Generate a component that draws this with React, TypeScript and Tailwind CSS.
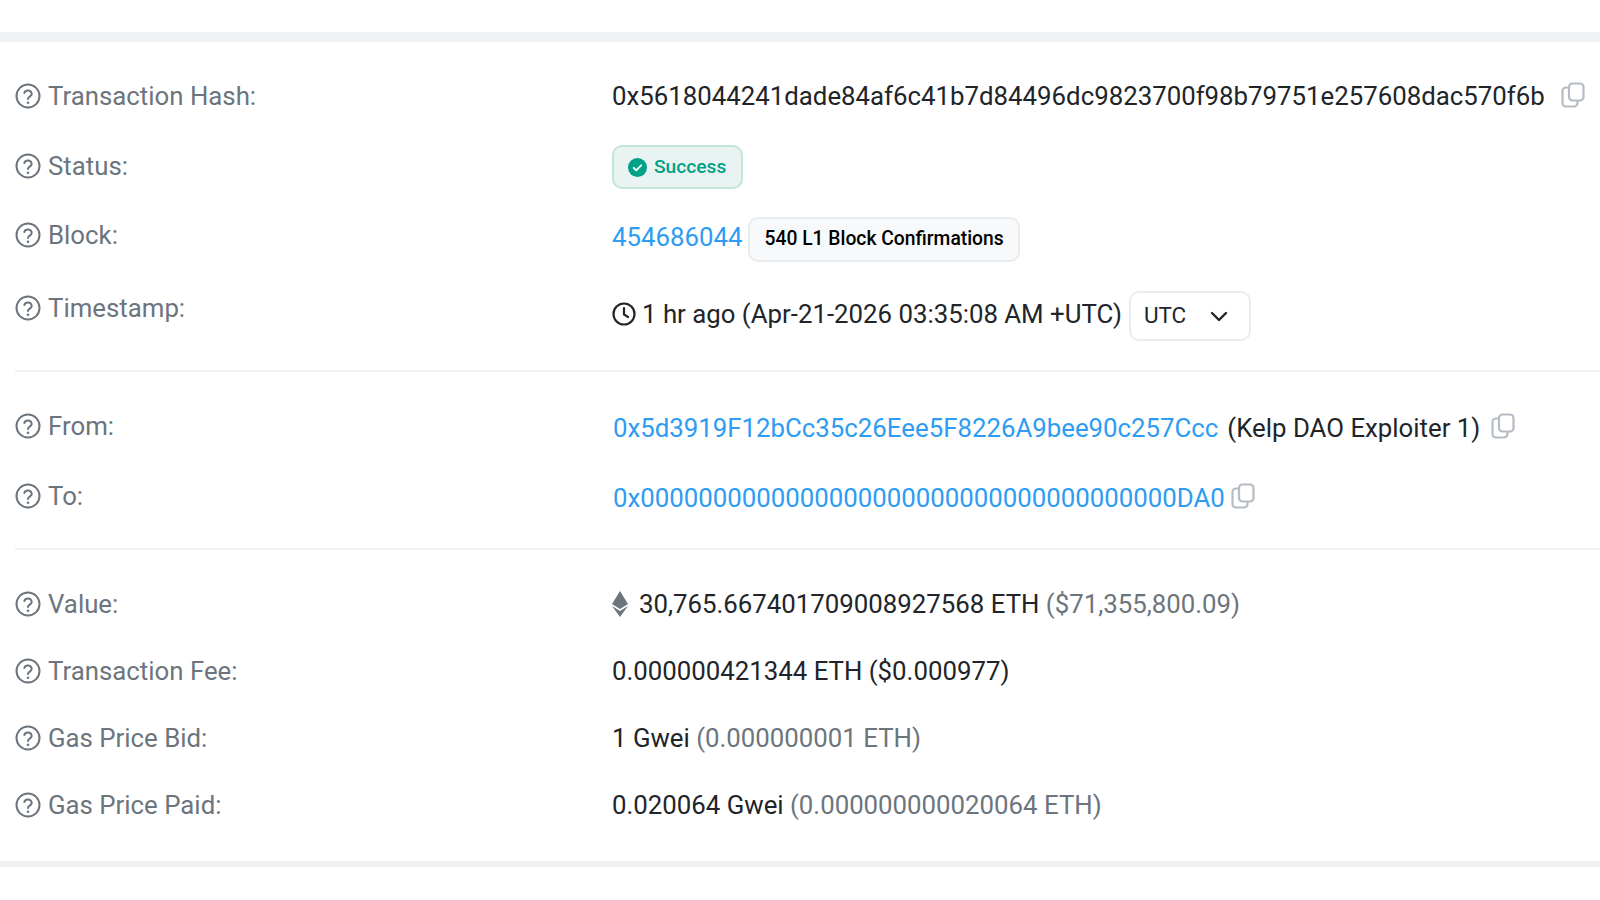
import React from "react";

const Q = () => (
  <svg width="26" height="26" viewBox="0 0 26 26" fill="none" stroke="#6c757d" strokeWidth="2" className="shrink-0">
    <circle cx="13" cy="13" r="11.5" />
    <path d="M9.300 10a3.800 3.800 0 0 1 7.400 1c0 2.500-3.700 2.800-3.700 5" strokeLinecap="round" />
    <circle cx="13" cy="19.800" r="1.300" fill="#6c757d" stroke="none" />
  </svg>
);

const Copy = () => (
  <svg width="24" height="26" viewBox="0 0 24 26" fill="none" stroke="#b6bcc4" strokeWidth="2.200" className="shrink-0">
    <rect x="8" y="1.500" width="14.500" height="17" rx="3.500" />
    <path d="M8 5.500H5A3.500 3.500 0 0 0 1.500 9v12A3.500 3.500 0 0 0 5 24.500h8a3.500 3.500 0 0 0 3.500-3.500v-2.500" />
  </svg>
);

const Row = ({ label, h, pt, lpt, children }: { label: string; h: string; pt: string; lpt?: string; children: React.ReactNode }) => (
  <div className={`flex ${h}`}>
    <div className={`w-[612px] shrink-0 flex items-start gap-[7px] pl-[15px] text-[#6c757d] ${lpt ?? pt}`}>
      <Q />
      <span className="leading-[26px]">{label}</span>
    </div>
    <div className={`flex items-start min-w-0 text-[#212529] whitespace-nowrap ${pt}`}>{children}</div>
  </div>
);

export default function App() {
  return (
    <div className="w-[1600px] h-[900px] overflow-hidden bg-white text-[25.800px] font-['Roboto',sans-serif]">
      <div className="h-[32px]" />
      <div className="h-[10px] bg-[#f0f1f4]" />
      <div className="h-[19px]" />
      <Row label="Transaction Hash:" h="h-[70px]" pt="pt-[22px]">
        <span className="leading-[26px]">0x5618044241dade84af6c41b7d84496dc9823700f98b79751e257608dac570f6b</span>
        <span className="ml-[16px] -mt-[1px]"><Copy /></span>
      </Row>
      <Row label="Status:" h="h-[70px]" pt="pt-[22px]">
        <span className="-mt-[8px] h-[44px] w-[131px] flex items-center gap-[7px] pl-[14px] rounded-[10px] border-2 border-[#c3e6dc] bg-[#e9f4f2] text-[#00a186] text-[19.200px] font-medium">
          <svg width="19" height="19" viewBox="0 0 19 19">
            <circle cx="9.500" cy="9.500" r="9.500" fill="#00a186" />
            <path d="M5.700 9.800l2.500 2.500 5-5" fill="none" stroke="#fff" strokeWidth="1.800" strokeLinecap="round" strokeLinejoin="round" />
          </svg>
          Success
        </span>
      </Row>
      <Row label="Block:" h="h-[70px]" pt="pt-[22px]" lpt="pt-[21px]">
        <span className="leading-[26px] text-[#2d9cf2] mt-[1px]">454686044</span>
        <span className="ml-[6px] -mt-[6px] h-[45px] px-[14px] flex items-center rounded-[10px] border-2 border-[#e9ecef] bg-[#f8f9fa] text-[19.300px] font-medium text-[#000]">540 L1 Block Confirmations</span>
      </Row>
      <Row label="Timestamp:" h="h-[99px]" pt="pt-[24px]">
        <span className="flex items-center mt-[6px] leading-[26px]">
          <svg width="24" height="24" viewBox="0 0 24 24" fill="none" stroke="#212529" strokeWidth="2.200" className="mr-[6px]">
            <circle cx="12" cy="12" r="10.500" />
            <path d="M12 6v6.500l4 2.500" strokeLinecap="round" />
          </svg>
          1 hr ago (Apr-21-2026 03:35:08 AM +UTC)
        </span>
        <span className="ml-[7px] -mt-[4px] h-[50px] w-[122px] flex items-center justify-between pl-[13px] pr-[21px] rounded-[10px] border-2 border-[#e9ecef] text-[22.500px] text-[#212529]">
          UTC
          <svg width="18" height="11" viewBox="0 0 18 11" fill="none" stroke="#212529" strokeWidth="2.400" strokeLinecap="round" strokeLinejoin="round"><path d="M2 2l7 7 7-7" /></svg>
        </span>
      </Row>
      <div className="h-[2px] ml-[15px] bg-[#eff1f3]" />
      <Row label="From:" h="h-[89px]" pt="pt-[41px]">
        <span className="leading-[26px] mt-[2px] ml-[1px] text-[#2d9cf2]">0x5d3919F12bCc35c26Eee5F8226A9bee90c257Ccc</span>
        <span className="leading-[26px] mt-[2px] ml-[9px]">(Kelp DAO Exploiter 1)</span>
        <span className="ml-[11px]"><Copy /></span>
      </Row>
      <Row label="To:" h="h-[87px]" pt="pt-[22px]">
        <span className="leading-[26px] mt-[2px] ml-[1px] text-[#2d9cf2]">0x0000000000000000000000000000000000000DA0</span>
        <span className="ml-[6px]"><Copy /></span>
      </Row>
      <div className="h-[2px] ml-[15px] bg-[#eff1f3]" />
      <Row label="Value:" h="h-[86px]" pt="pt-[41px]">
        <svg width="16" height="26" viewBox="0 0 16 26" className="mr-[11px]">
          <path d="M8 0L16 13 8 18 0 13z" fill="#6c757d" />
          <path d="M0 15l8 5 8-5-8 11z" fill="#6c757d" />
        </svg>
        <span className="leading-[26px]">30,765.667401709008927568 ETH <span className="text-[#6c757d]">($71,355,800.09)</span></span>
      </Row>
      <Row label="Transaction Fee:" h="h-[67px]" pt="pt-[22px]">
        <span className="leading-[26px]">0.000000421344 ETH ($0.000977)</span>
      </Row>
      <Row label="Gas Price Bid:" h="h-[67px]" pt="pt-[22px]">
        <span className="leading-[26px]">1 Gwei <span className="text-[#6c757d]">(0.000000001 ETH)</span></span>
      </Row>
      <Row label="Gas Price Paid:" h="h-[91px]" pt="pt-[22px]">
        <span className="leading-[26px]">0.020064 Gwei <span className="text-[#6c757d]">(0.000000000020064 ETH)</span></span>
      </Row>
      <div className="h-[6px] bg-[#f0f1f4]" />
    </div>
  );
}
